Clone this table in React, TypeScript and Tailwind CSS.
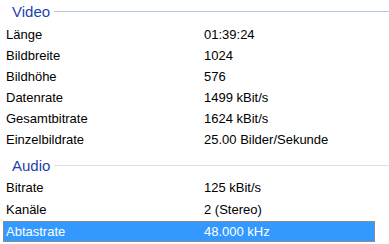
type Row = { label: string; value: string; selected?: boolean };

const video: Row[] = [
  { label: "Länge", value: "01:39:24" },
  { label: "Bildbreite", value: "1024" },
  { label: "Bildhöhe", value: "576" },
  { label: "Datenrate", value: "1499 kBit/s" },
  { label: "Gesamtbitrate", value: "1624 kBit/s" },
  { label: "Einzelbildrate", value: "25.00 Bilder/Sekunde" },
];

const audio: Row[] = [
  { label: "Bitrate", value: "125 kBit/s" },
  { label: "Kanäle", value: "2 (Stereo)" },
  { label: "Abtastrate", value: "48.000 kHz", selected: true },
];

function GroupHeader({ title, line, className }: { title: string; line: string; className: string }) {
  return (
    <div className={`flex items-center ${className}`}>
      <span className="pl-[12px] pr-[4px] text-[15px] leading-none text-[#1e3fae]">{title}</span>
      <div className={`h-px flex-1 ${line}`} />
    </div>
  );
}

function PropRow({ row, h }: { row: Row; h: string }) {
  return (
    <div className={`flex items-center ${h}`}>
      <div
        className={
          row.selected
            ? "ml-[3px] flex h-[21px] w-[372px] items-center border border-dotted border-[#d2852e] bg-[#3399ff] text-white"
            : "ml-[3px] flex w-[372px] items-center border border-transparent text-black"
        }
      >
        <span className="w-[200px] pl-[2px]">{row.label}</span>
        <span>{row.value}</span>
      </div>
    </div>
  );
}

export default function App() {
  return (
    <div
      className="h-[244px] w-[389px] overflow-hidden bg-white text-[13px] leading-none"
      style={{ fontFamily: '"Liberation Sans", Arial, sans-serif' }}
    >
      <GroupHeader title="Video" line="bg-[#b3c5e8]" className="h-[21px] pt-[1px]" />
      <div className="pt-[3px]">
        {video.map((r) => (
          <PropRow key={r.label} row={r} h="h-[21px]" />
        ))}
      </div>
      <GroupHeader title="Audio" line="bg-[#dadeee]" className="h-[28px] pt-[2px]" />
      <div className="-mt-[2px]">
        {audio.map((r) => (
          <PropRow key={r.label} row={r} h="h-[22px]" />
        ))}
      </div>
    </div>
  );
}
